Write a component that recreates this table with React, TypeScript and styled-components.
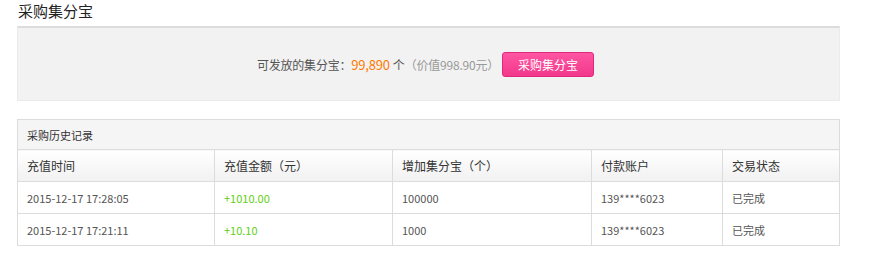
import React from 'react';
import styled, { createGlobalStyle } from 'styled-components';

const GlobalStyle = createGlobalStyle`
  body {
    margin: 0;
    background: #fff;
    font-family: "Noto Sans CJK SC", "Noto Sans", sans-serif;
    color: #333;
  }
`;

type Record = {
  time: string;
  amount: string;
  points: string;
  account: string;
  status: string;
};

const records: Record[] = [
  { time: '2015-12-17 17:28:05', amount: '+1010.00', points: '100000', account: '139****6023', status: '已完成' },
  { time: '2015-12-17 17:21:11', amount: '+10.10', points: '1000', account: '139****6023', status: '已完成' },
];

const columns = [
  { title: '充值时间', width: 197 },
  { title: '充值金额（元）', width: 178 },
  { title: '增加集分宝（个）', width: 199 },
  { title: '付款账户', width: 131 },
  { title: '交易状态', width: 117 },
];

const Page = styled.div`
  width: 823px;
  padding: 0 0 0 17px;
`;

const Title = styled.h2`
  margin: 0;
  height: 26px;
  padding-left: 1px;
  font-size: 15px;
  font-weight: normal;
  line-height: 22px;
  color: #222;
`;

const BuyPanel = styled.div`
  box-sizing: border-box;
  height: 75px;
  display: flex;
  align-items: center;
  justify-content: center;
  gap: 3px;
  padding-right: 6px;
  background: #f2f2f2;
  border: 1px solid #ebebeb;
  border-top: 2px solid #dcdcdc;
`;

const Available = styled.span`
  font-size: 12px;
  letter-spacing: -0.2px;
  color: #555;
`;

const Amount = styled.span`
  font-size: 13px;
  margin-right: 3px;
  color: #ff7a00;
`;

const Worth = styled.span`
  color: #999;
`;

const BuyButton = styled.button`
  width: 92px;
  height: 25px;
  border: 1px solid #e0287a;
  border-radius: 3px;
  background: linear-gradient(#ff55a3, #f2388a);
  color: #fff;
  font-family: inherit;
  font-size: 12px;
  cursor: pointer;
`;

const HistoryTable = styled.table`
  margin-top: 18px;
  width: 823px;
  table-layout: fixed;
  border-collapse: collapse;
  font-size: 11px;
`;

const Caption = styled.th`
  height: 29px;
  padding: 0 9px;
  text-align: left;
  font-weight: normal;
  font-size: 11px;
  color: #333;
  background: #f5f5f5;
  border: 1px solid #dcdcdc;
`;

const HeadCell = styled.th`
  height: 31px;
  padding: 0 9px;
  text-align: left;
  font-weight: normal;
  font-size: 12px;
  color: #333;
  background: linear-gradient(#ffffff, #f1f1f1);
  border: 1px solid #dcdcdc;
`;

const Cell = styled.td<{ $accent?: boolean }>`
  height: 31px;
  padding: 0 9px;
  color: ${p => (p.$accent ? '#5fcf12' : '#555')};
  border: 1px solid #dcdcdc;
`;

export default function App() {
  return (
    <>
      <GlobalStyle />
      <Page>
        <Title>采购集分宝</Title>
        <BuyPanel>
          <Available>
            可发放的集分宝：<Amount>99,890</Amount>个<Worth>（价值998.90元）</Worth>
          </Available>
          <BuyButton>采购集分宝</BuyButton>
        </BuyPanel>
        <HistoryTable>
          <colgroup>
            {columns.map(c => (
              <col key={c.title} style={{ width: c.width }} />
            ))}
          </colgroup>
          <thead>
            <tr>
              <Caption colSpan={columns.length}>采购历史记录</Caption>
            </tr>
            <tr>
              {columns.map(c => (
                <HeadCell key={c.title}>{c.title}</HeadCell>
              ))}
            </tr>
          </thead>
          <tbody>
            {records.map(r => (
              <tr key={r.time}>
                <Cell>{r.time}</Cell>
                <Cell $accent>{r.amount}</Cell>
                <Cell>{r.points}</Cell>
                <Cell>{r.account}</Cell>
                <Cell>{r.status}</Cell>
              </tr>
            ))}
          </tbody>
        </HistoryTable>
      </Page>
    </>
  );
}
